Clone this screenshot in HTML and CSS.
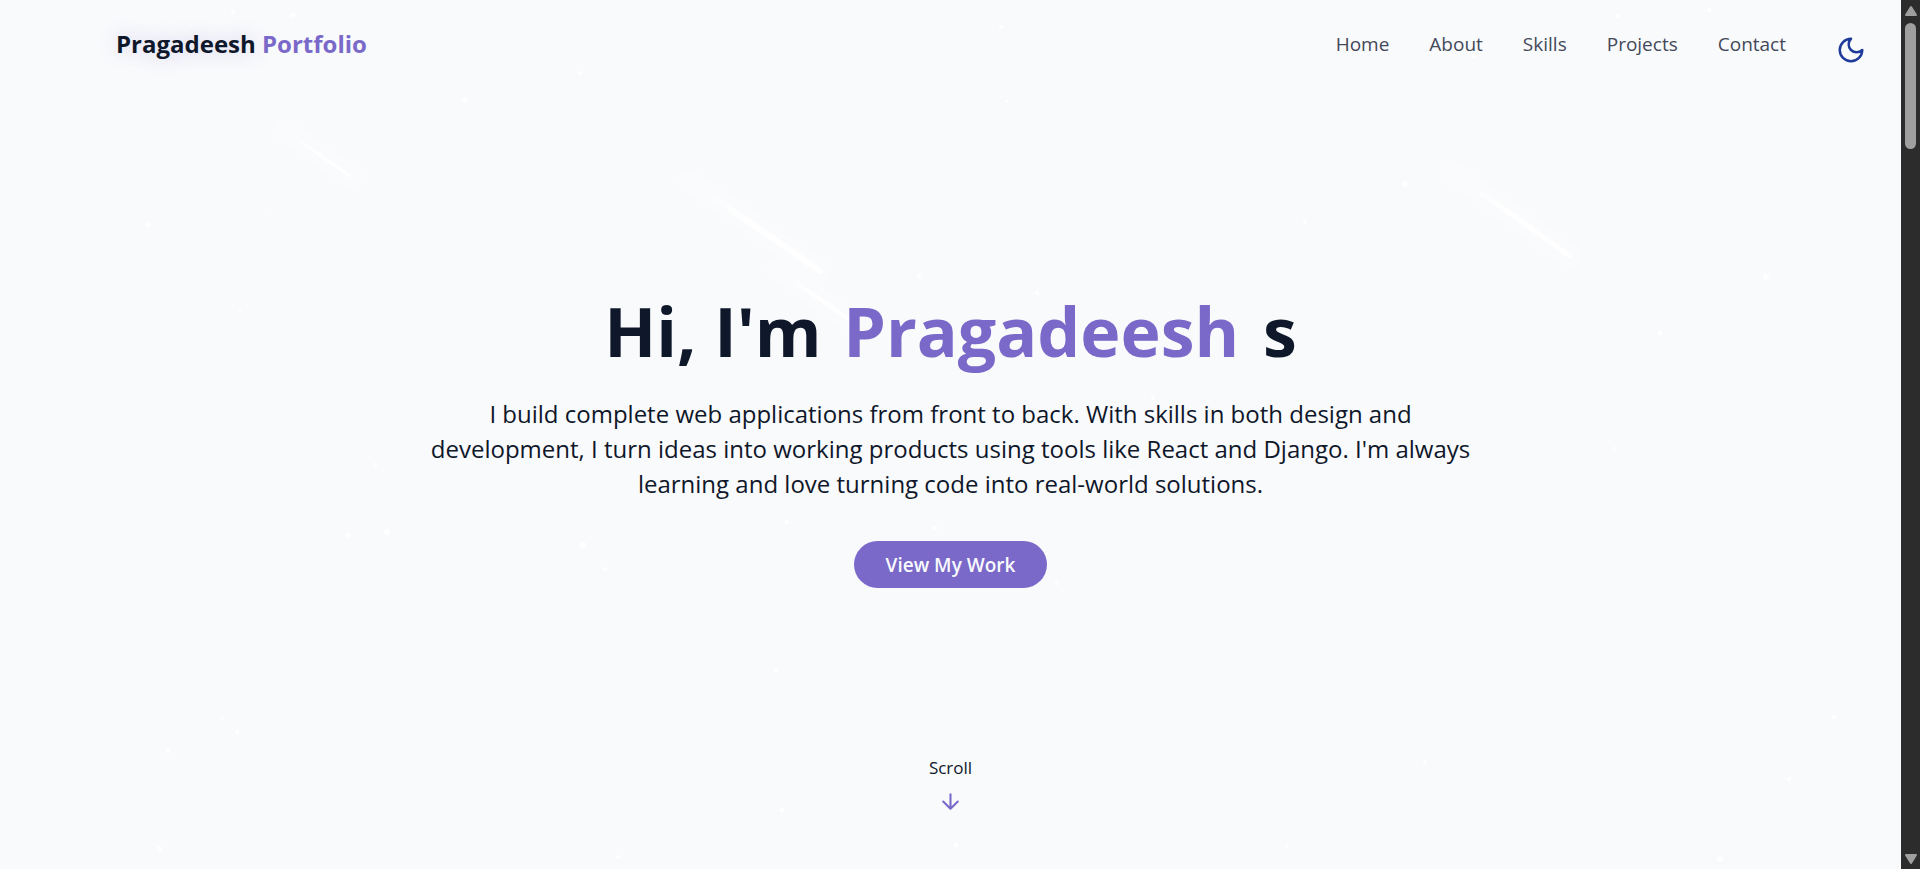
FILE: index.html
```html
<!DOCTYPE html>
<html lang="en">
<head>
<meta charset="utf-8">
<title>Pragadeesh Portfolio</title>
<link rel="stylesheet" href="styles.css">
</head>
<body>
<div class="page">
  <svg class="sky" viewBox="0 0 1901 869" preserveAspectRatio="xMidYMid slice" aria-hidden="true">
    <defs>
      <linearGradient id="tail" x1="0" y1="0" x2="1" y2="1">
        <stop offset="0.1" stop-color="#fff" stop-opacity="0"/>
        <stop offset="0.45" stop-color="#fff"/>
      </linearGradient>
    </defs>
    <g class="glow">
      <path d="M284 130 351 176"/>
      <path d="M690 181 820 271"/>
      <path d="M1452 172 1570 256"/>
      <path d="M778 270 850 320"/>
    </g>
    <g class="meteors" stroke="url(#tail)">
      <path stroke-width="3" d="M284 130 350 176"/>
      <path stroke-width="6" d="M690 181 820 271"/>
      <path stroke-width="5" d="M1452 172 1570 256"/>
      <path stroke-width="4" d="M778 270 850 320"/>
    </g>
    <g class="stars">
      <circle cx="233" cy="12" r="2"/><circle cx="293" cy="15" r="2.5"/><circle cx="465" cy="100" r="2.5"/>
      <circle cx="580" cy="73" r="2"/><circle cx="1001" cy="27" r="2"/><circle cx="1007" cy="101" r="1.5"/>
      <circle cx="1618" cy="16" r="2"/><circle cx="1709" cy="10" r="2"/><circle cx="1474" cy="56" r="2"/>
      <circle cx="148" cy="225" r="2.5"/><circle cx="267" cy="212" r="1"/><circle cx="240" cy="311" r="1.5"/>
      <circle cx="1405" cy="184" r="2.5"/><circle cx="1305" cy="222" r="2"/><circle cx="1766" cy="277" r="3"/>
      <circle cx="1660" cy="333" r="2.5"/><circle cx="919" cy="276" r="2"/><circle cx="1037" cy="293" r="2"/>
      <circle cx="375" cy="465" r="2"/><circle cx="348" cy="535" r="2.5"/><circle cx="387" cy="532" r="3"/>
      <circle cx="583" cy="545" r="3"/><circle cx="605" cy="569" r="2"/><circle cx="787" cy="522" r="2"/>
      <circle cx="935" cy="528" r="2"/><circle cx="1057" cy="583" r="2"/><circle cx="1130" cy="471" r="2"/>
      <circle cx="1153" cy="398" r="2"/><circle cx="776" cy="670" r="2"/><circle cx="168" cy="751" r="2"/>
      <circle cx="237" cy="732" r="2"/><circle cx="223" cy="719" r="1"/><circle cx="159" cy="849" r="2.5"/>
      <circle cx="782" cy="810" r="2"/><circle cx="956" cy="845" r="2.5"/><circle cx="618" cy="857" r="2"/>
      <circle cx="1287" cy="846" r="1.5"/><circle cx="1425" cy="762" r="2"/><circle cx="1834" cy="717" r="2"/>
      <circle cx="1789" cy="779" r="2"/><circle cx="1720" cy="859" r="2.5"/><circle cx="1615" cy="448" r="1.5"/>
    </g>
  </svg>

  <header class="topbar">
    <a class="brand" href="#home"><span class="brand-name">Pragadeesh</span> <span class="accent">Portfolio</span></a>
    <nav class="menu">
      <a href="#home">Home</a>
      <a href="#about">About</a>
      <a href="#skills">Skills</a>
      <a href="#projects">Projects</a>
      <a href="#contact">Contact</a>
    </nav>
    <button class="theme" type="button" aria-label="Switch to dark mode">
      <svg viewBox="0 0 24 24" aria-hidden="true"><path d="M12 3a6 6 0 0 0 9 9 9 9 0 1 1-9-9Z"/></svg>
    </button>
  </header>

  <main class="hero" id="home">
    <h1 class="title"><span>Hi, I'm</span> <span class="accent name">Pragadeesh</span> <span class="initial">s</span></h1>
    <p class="lead">I build complete web applications from front to back. With skills in both design and development, I turn ideas into working products using tools like React and Django. I'm always learning and love turning code into real-world solutions.</p>
    <a class="cta" href="#projects">View My Work</a>
  </main>

  <div class="scroll-hint">
    <span>Scroll</span>
    <svg viewBox="0 0 24 24" aria-hidden="true"><path d="M12 5v14M19 12l-7 7-7-7"/></svg>
  </div>
</div>

<div class="scrollbar" aria-hidden="true">
  <svg class="arrow" viewBox="0 0 14 12"><path d="M7 2 12 10H2Z"/></svg>
  <div class="track"><div class="thumb"></div></div>
  <svg class="arrow" viewBox="0 0 14 12"><path d="M7 10 2 2H12Z"/></svg>
</div>
</body>
</html>
```
FILE: styles.css
```css
* { box-sizing: border-box; }

body {
  display: flex;
  min-height: 100vh;
  margin: 0;
  background: #f9fafc;
  color: #0f172a;
  font-family: "Open Sans", "Noto Sans", sans-serif;
}

a { color: inherit; text-decoration: none; }

.accent { color: #7a69c9; }

.page {
  position: relative;
  display: flex;
  flex: 1;
  flex-direction: column;
  overflow: hidden;
}

.sky {
  position: absolute;
  inset: 0;
  width: 100%;
  height: 100%;
}

.stars { fill: #fff; }

.meteors, .glow { fill: none; stroke-linecap: round; }

.glow { stroke: #fff; stroke-opacity: 0.25; stroke-width: 22; }

.topbar {
  position: relative;
  display: flex;
  align-items: center;
  padding: 23px 35px 25px 116px;
}

.brand {
  margin-right: auto;
  font-size: 24px;
  font-weight: 700;
  line-height: 40px;
}

.brand-name { text-shadow: 0 0 20px rgba(122, 105, 201, 0.3); }

.menu {
  display: flex;
  gap: 40px;
  color: #434959;
  font-size: 19px;
  line-height: 40px;
}

.theme {
  display: flex;
  margin: 12px 0 0 50px;
  padding: 0;
  border: 0;
  background: none;
}

.theme svg {
  width: 30px;
  height: 30px;
  fill: none;
  stroke: #1e3a9a;
  stroke-width: 2;
  stroke-linecap: round;
  stroke-linejoin: round;
}

.hero {
  position: relative;
  display: flex;
  flex: 1;
  flex-direction: column;
  align-items: center;
  padding: 201px 32px 40px;
  text-align: center;
}

.title {
  margin: 0;
  font-size: 68px;
  font-weight: 700;
  line-height: 80px;
}

.name { margin-left: 4px; }

.initial { margin-left: 6px; }

.lead {
  max-width: 1070px;
  margin: 25px 0 0;
  font-size: 24px;
  line-height: 35px;
}

.cta {
  margin-top: 40px;
  padding: 1px 32px 0;
  border-radius: 24px;
  background: #7a69c9;
  color: #f9fafc;
  font-size: 19px;
  font-weight: 600;
  line-height: 46px;
}

.scroll-hint {
  position: relative;
  display: flex;
  flex-direction: column;
  align-items: center;
  gap: 9px;
  padding-bottom: 55px;
  font-size: 17px;
  line-height: 24px;
}

.scroll-hint svg {
  width: 25px;
  height: 25px;
  fill: none;
  stroke: #7a69c9;
  stroke-width: 2;
  stroke-linecap: round;
  stroke-linejoin: round;
}

.scrollbar {
  display: flex;
  flex-direction: column;
  align-items: center;
  width: 19px;
  padding: 5px 0 4px;
  background: #2c2c2c;
}

.arrow {
  width: 14px;
  height: 12px;
  fill: #9f9f9f;
  stroke: #9f9f9f;
  stroke-width: 2;
  stroke-linejoin: round;
}

.track { flex: 1; padding: 6px 0; }

.thumb {
  width: 11px;
  height: 126px;
  border-radius: 6px;
  background: #9f9f9f;
}
```
